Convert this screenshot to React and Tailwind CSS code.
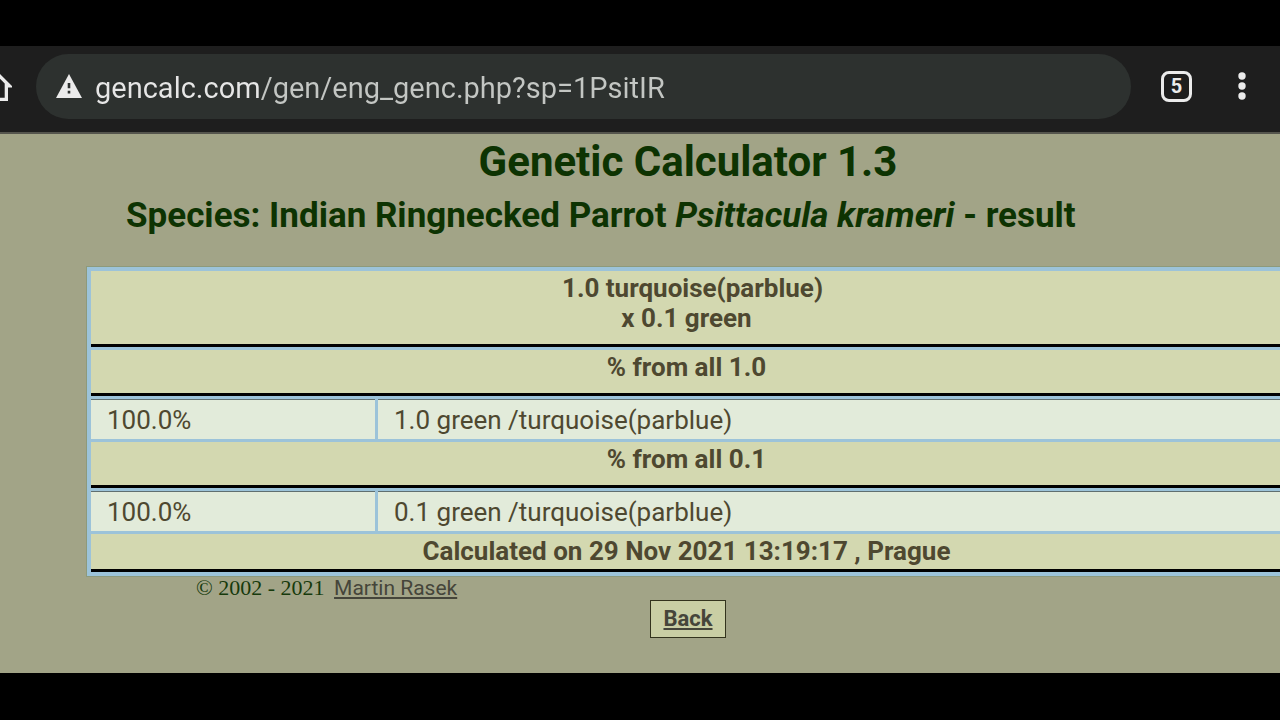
const sections = [
    {
        title: "% from all 1.0",
        rows: [{ percent: "100.0%", name: "1.0 green /turquoise(parblue)" }],
    },
    {
        title: "% from all 0.1",
        rows: [{ percent: "100.0%", name: "0.1 green /turquoise(parblue)" }],
    },
];

function HomeIcon() {
    return (
        <svg viewBox="0 0 36 33" className="h-[33px] w-9" fill="#ebebeb" fillRule="evenodd">
            <path d="M18 0L36 18v1.5h-4V33H4V19.500H0V18zM18 4.800L28.700 15.500V29.700H7.300V15.500z" />
        </svg>
    );
}

function WarningIcon() {
    return (
        <svg viewBox="0 0 26 24" className="h-6 w-[26px] shrink-0">
            <path d="M13 0L26 24H0z" fill="#ebebeb" />
            <path d="M11.700 9h2.600v5.200h-2.600zM11.700 16.800h2.600v2.700h-2.600z" fill="#2d312f" />
        </svg>
    );
}

function BrowserBar() {
    return (
        <header className="flex h-[88px] items-center border-b-2 border-[#55554d] bg-[#1e1e1e] pb-1.5">
            <button aria-label="Home" className="mb-1 -ml-6 w-9 shrink-0">
                <HomeIcon />
            </button>

            <div className="ml-6 flex h-[65px] min-w-0 flex-1 items-center rounded-full bg-[#2d312f] pl-5">
                <WarningIcon />
                {/* the host part of the address is brighter than the path */}
                <input
                    type="text"
                    aria-label="Address"
                    defaultValue="gencalc.com/gen/eng_genc.php?sp=1PsitIR"
                    className="ml-[13px] h-12 min-w-0 flex-1 bg-[linear-gradient(to_right,#e6e6e6_165px,#c3c6c3_165px)] bg-clip-text pt-1 text-[29px] text-transparent outline-none"
                />
            </div>

            <button
                aria-label="Open tabs"
                className="ml-[30px] flex h-[31px] w-[31px] shrink-0 items-center justify-center rounded-lg border-3 border-[#ebebeb] text-xl font-bold text-[#ebebeb]"
            >
                5
            </button>
            <button aria-label="Menu" className="mr-[34px] ml-[46px] shrink-0">
                <svg viewBox="0 0 8 28" className="h-7 w-2" fill="#ebebeb">
                    <circle cx="4" cy="4" r="3.7" />
                    <circle cx="4" cy="14" r="3.7" />
                    <circle cx="4" cy="24" r="3.7" />
                </svg>
            </button>
        </header>
    );
}

function HeadCell({ className, children }) {
    return (
        <th colSpan={2} className={`border-b-3 border-black bg-[#d3d8b0] p-0 pt-0.5 align-top font-bold ${className}`}>
            {children}
        </th>
    );
}

function ResultTable() {
    return (
        <table className="w-full table-fixed border-separate border-spacing-[3px] border border-[#9cc3d9] bg-[#9cc3d9] text-[26px] leading-[30px] text-[#4e4830] outline outline-[#8d9a7c]">
            <colgroup>
                <col className="w-[284px]" />
                <col />
            </colgroup>
            <thead>
                <tr>
                    <HeadCell className="h-[76px]">
                        <span className="pl-3">1.0 turquoise(parblue)</span>
                        <br />
                        x 0.1 green
                    </HeadCell>
                </tr>
            </thead>
            {sections.map((section) => (
                <tbody key={section.title}>
                    <tr>
                        <HeadCell className="h-[46px]">{section.title}</HeadCell>
                    </tr>
                    {section.rows.map((row) => (
                        <tr key={row.name} className="bg-[#e2ebda]">
                            <td className="h-10 border-t border-[#5f6f70] p-0 pl-4">{row.percent}</td>
                            <td className="h-10 border-t border-[#5f6f70] p-0 pl-4">{row.name}</td>
                        </tr>
                    ))}
                </tbody>
            ))}
            <tfoot>
                <tr>
                    <HeadCell className="h-[38px]">Calculated on 29 Nov 2021 13:19:17 , Prague</HeadCell>
                </tr>
            </tfoot>
        </table>
    );
}

export default function App() {
    return (
        <div className="min-h-screen overflow-hidden bg-black py-[46px] font-['Roboto',sans-serif]">
            <BrowserBar />

            <main className="bg-[#a2a487] pb-[35px]">
                <h1 className="pt-1 pl-24 text-center text-[42px] leading-[48px] font-bold text-[#0d3302]">
                    Genetic Calculator 1.3
                </h1>
                <h2 className="pt-2 pl-[126px] text-[35px] leading-[44px] font-bold whitespace-nowrap text-[#0d3302]">
                    Species: Indian Ringnecked Parrot <i>Psittacula krameri</i> - result
                </h2>

                {/* the table runs a little past the right edge of the screen */}
                <div className="mt-[29px] -mr-1.5 ml-[87px]">
                    <ResultTable />
                </div>

                <p className="pl-[196px] font-['Liberation_Serif',serif] text-[22px] leading-6 text-[#163a0c]">
                    © 2002 - 2021{" "}
                    <a href="#author" className="ml-1 font-['Roboto',sans-serif] text-[21px] leading-6 text-[#45453a] underline">
                        Martin Rasek
                    </a>
                </p>
                <div className="flex justify-center pl-24">
                    <a
                        href="#back"
                        className="border border-[#33331d] bg-[#c9cea4] px-3 py-1 text-[22px] leading-7 font-bold text-[#45453a] underline"
                    >
                        Back
                    </a>
                </div>
            </main>
        </div>
    );
}
